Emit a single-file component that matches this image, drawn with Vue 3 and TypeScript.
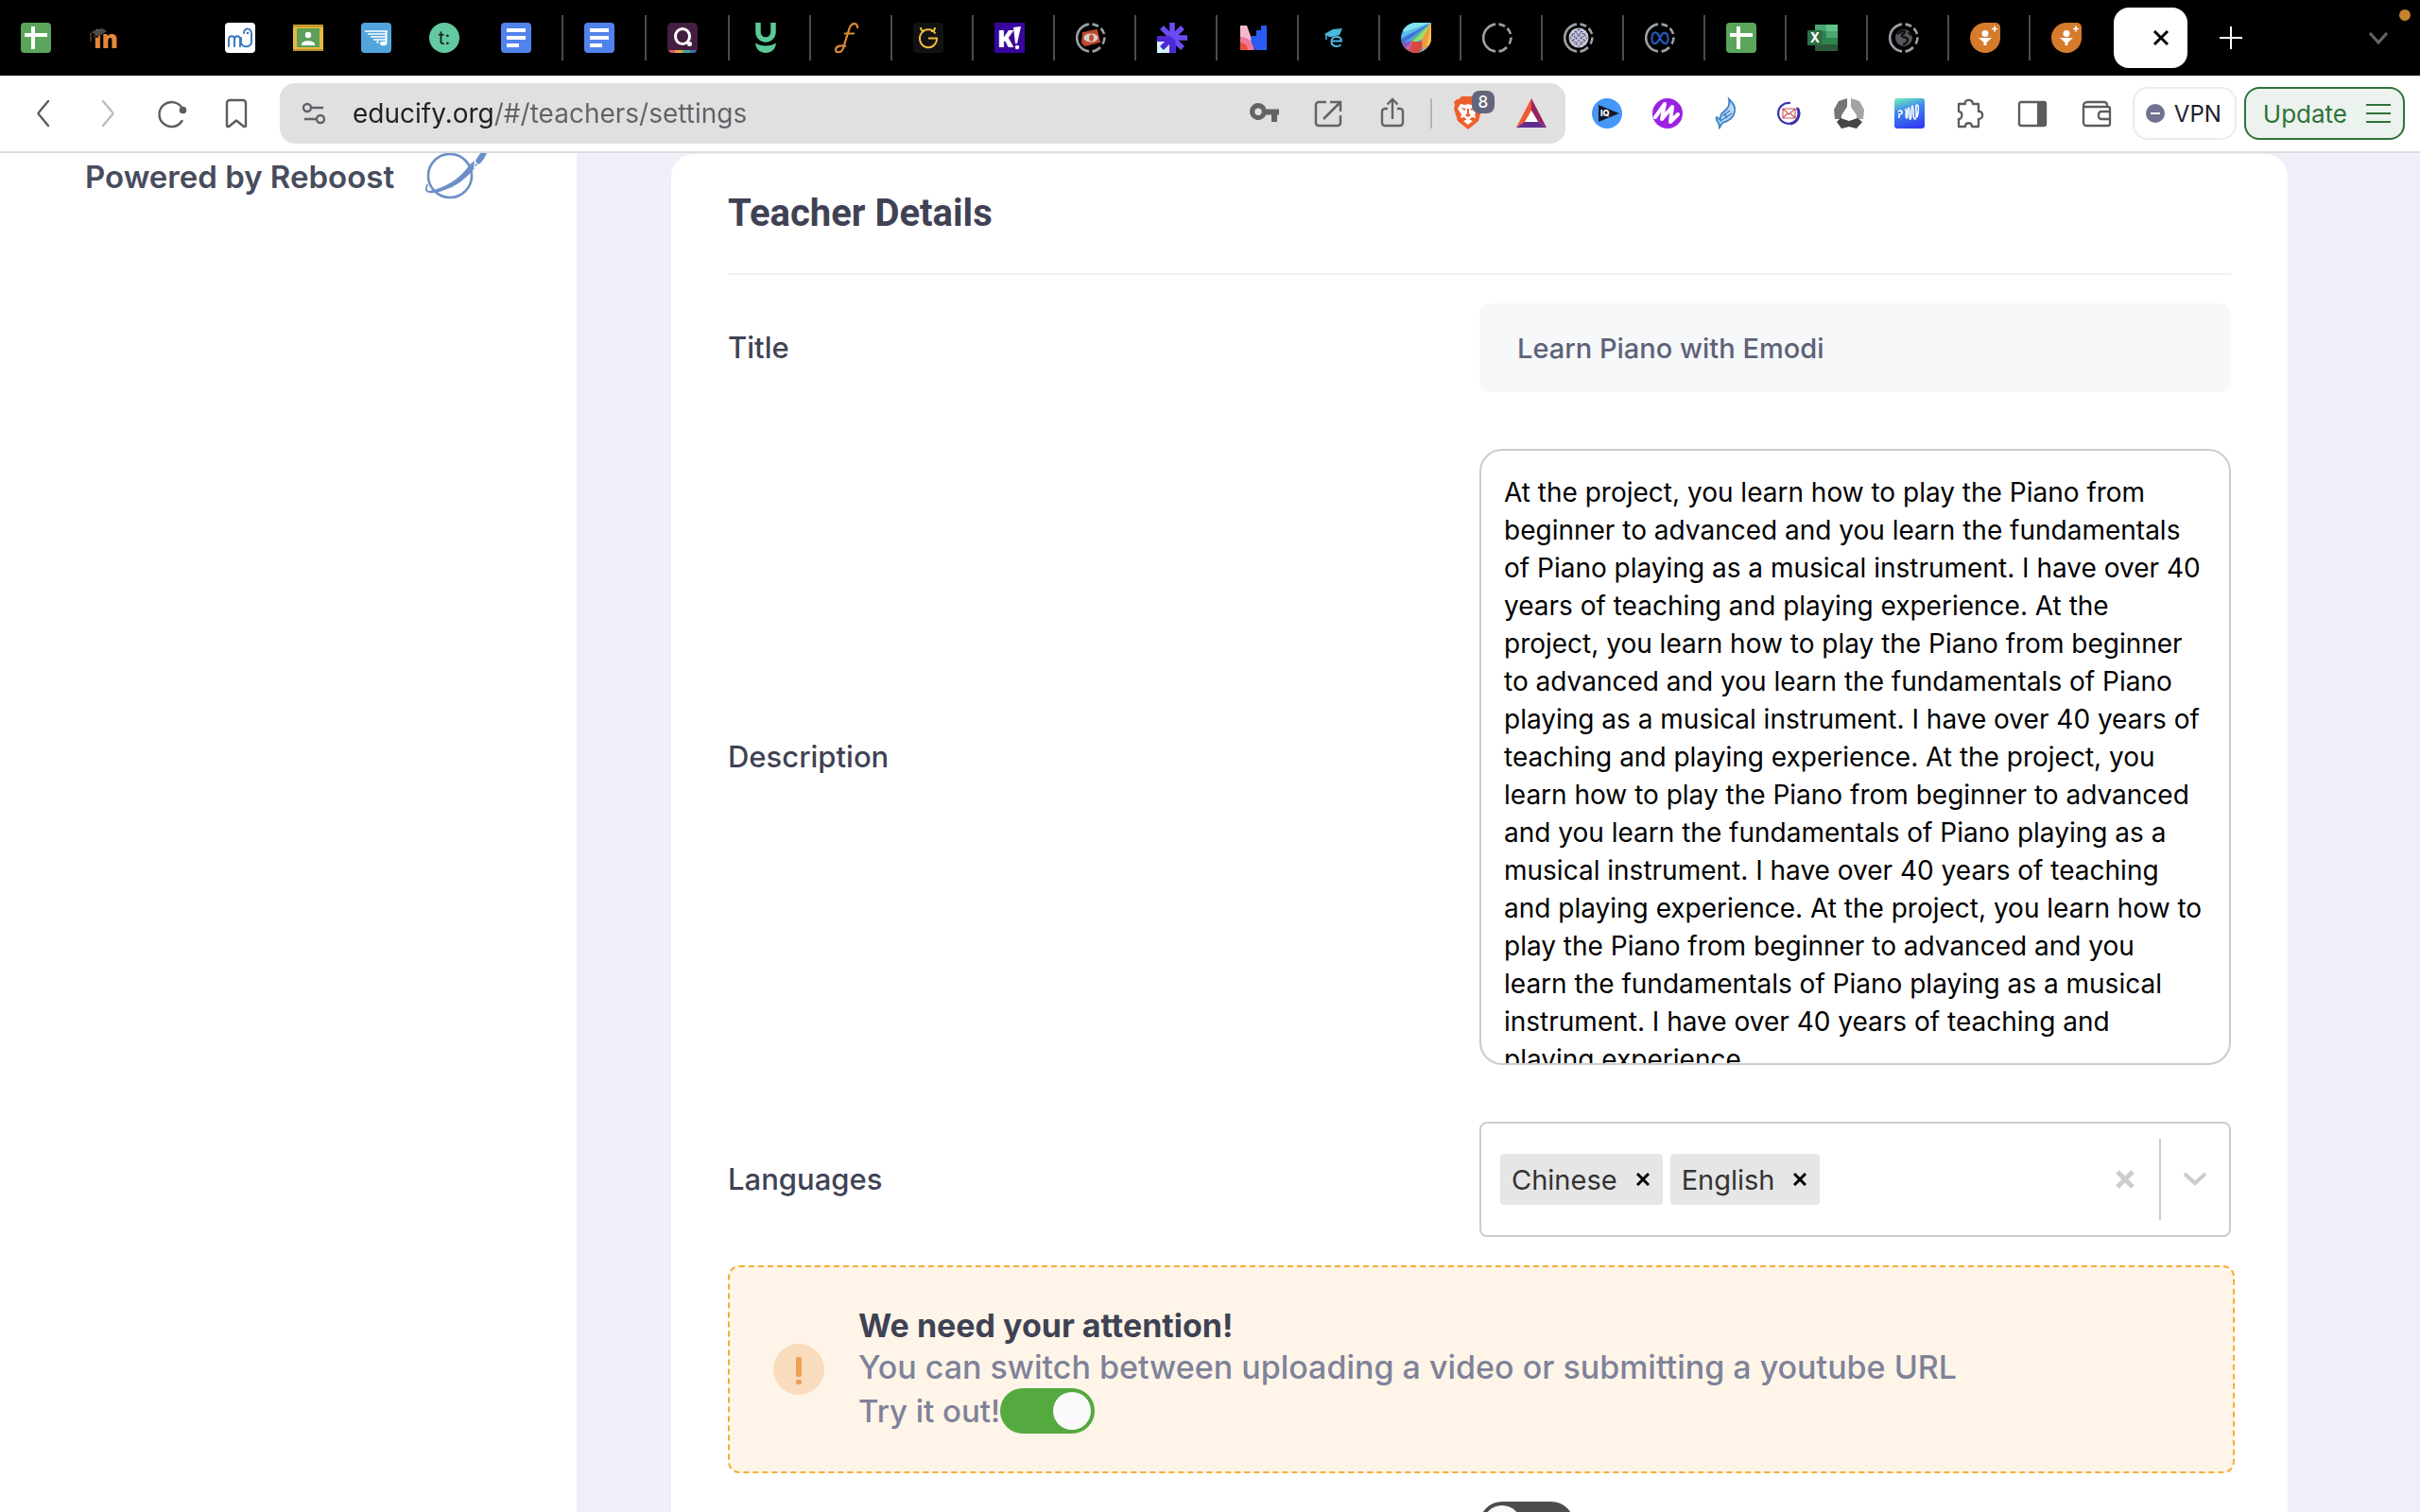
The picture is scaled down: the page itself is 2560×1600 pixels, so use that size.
<script setup lang="ts">
import { ref } from 'vue'

interface Tab {
  icon: string
  label: string
}

const ring =
  '<g fill="none" stroke="#9aa0a6" stroke-width="2.6"><path d="M14 1.6A14.5 14.5 0 0 0 14 30.4"/><path d="M17.5 1.6A14.5 14.5 0 0 1 24 3.8M26.5 6A14.5 14.5 0 0 1 30 12M30.500 15.500A14.500 14.500 0 0 1 28.500 22.500M26 26A14.500 14.500 0 0 1 17.500 30.400"/></g>'

const sheets =
  '<rect width="32" height="32" rx="4" fill="#5aa55b"/><path d="M4 13h24M13 4v24" stroke="#fff" stroke-width="4"/>'

const docs =
  '<rect width="32" height="32" rx="4" fill="#5283ec"/><path d="M6 8h20M6 16h20M6 24h13" stroke="#fff" stroke-width="4"/>'

const lead =
  '<path d="M16 0H27a5 5 0 0 1 5 5V16A16 16 0 1 1 16 0Z" fill="#d67b2c"/><circle cx="16" cy="11.500" r="3.500" fill="#fff"/><path d="M9 16h14l-5.500 5v3l-3 0v-3Z" fill="#fff"/><path d="M26 3.500v6M23 6.500h6" stroke="#fff" stroke-width="1.600"/>'

const icons: Record<string, string> = {
  sheets,
  docs,
  lead,
  blank: '',
  moodle:
    '<text x="5" y="27" font-family="Open Sans, sans-serif" font-weight="800" font-size="26" fill="#e0883c">in</text><path d="M2 10 14 6l5 3-8 5Z" fill="#4e4a48"/><path d="M2 11v9" stroke="#6b3b22" stroke-width="1.500"/><path d="M5 13h5v3H5Z" fill="#2b2624"/>',
  musescore:
    '<rect width="32" height="32" rx="4" fill="#fff"/><path d="M4 25V18c0-5 6-5 6 0v7M10 18c0-5 6-5 6 0v7M17 16v4c0 7 11 7 11 0v-8c0-7-8-7-8-1" fill="none" stroke="#3d78bd" stroke-width="2" stroke-linecap="round"/><circle cx="24" cy="11" r="1.300" fill="#3d78bd"/>',
  classroom:
    '<rect y="2" width="32" height="28" rx="1" fill="#e9b93f"/><path d="M0 3.500h32M0 29h32" stroke="#b8912c" stroke-width="2"/><rect x="4" y="6" width="24" height="20" fill="#5b9f59"/><circle cx="16" cy="13" r="3.200" fill="#fff"/><path d="M9 23c0-5 14-5 14 0v1H9Z" fill="#fff"/>',
  noteflight:
    '<rect width="32" height="32" rx="4" fill="#51a4dc"/><path d="M4 9h24M7 12h19M10 15h16M13 18h13" stroke="#fff" stroke-width="1.500"/><path d="M26.500 9v13" stroke="#fff" stroke-width="2"/><ellipse cx="23.500" cy="22" rx="3.600" ry="2.300" fill="#fff"/><circle cx="17.500" cy="20.500" r="1.200" fill="#fff"/>',
  tcircle:
    '<circle cx="16" cy="16" r="16" fill="#62c9a0"/><text x="16" y="23" text-anchor="middle" font-family="Inter, sans-serif" font-size="20" fill="#17202c">t:</text>',
  quizgame:
    '<rect width="32" height="32" rx="5" fill="#431e40"/><path d="M1 28.500Q2 32 5 32H9V29H1Z" fill="#e0506e"/><path d="M8 29h8v3H8Z" fill="#f0a63c"/><path d="M16 29h8v3h-8Z" fill="#45a59b"/><path d="M24 29h7q-1 3-4 3h-3Z" fill="#3b6fb0"/><ellipse cx="16" cy="14.500" rx="7.500" ry="8" fill="none" stroke="#fff" stroke-width="3"/><circle cx="23.500" cy="22.500" r="2.500" fill="#fff"/>',
  ugreen:
    '<path d="M8 0v10a8 8 0 0 0 16 0V0" fill="none" stroke="#5bca97" stroke-width="5.500"/><path d="M5 21.500c6 4 16 4 22 0-1 14-21 14-22 0Z" fill="#5bca97"/>',
  fscript:
    '<path d="M27 6c1-6-6-7-8.500 0L12 27c-2 6-9 5-8 1 1-4 7-4 11-3" fill="none" stroke="#df8a33" stroke-width="2.200"/><path d="M13 11.500h11" stroke="#df8a33" stroke-width="2"/>',
  ghorn:
    '<rect width="32" height="32" rx="4" fill="#121212"/><path d="M23.500 11.500A9 9.500 0 1 0 25 16.500H16M8 5q0 4 4 4M23 5q0 4-4 4" fill="none" stroke="#f0bd3a" stroke-width="2"/>',
  kahoot:
    '<rect width="32" height="32" fill="#38069c"/><text x="3" y="26" font-family="Open Sans, sans-serif" font-weight="800" font-size="25" fill="#fff">K</text><path d="m20 5 8-1-4 18h-2Z" fill="#fff"/><circle cx="24" cy="26" r="2.200" fill="#fff"/>',
  eye:
    ring +
    '<path d="m8 11 14-3 3 12-15 4-3-3Z" fill="#bf4a2c" stroke="#bf4a2c" stroke-width="2" stroke-linejoin="round"/><ellipse cx="16" cy="16" rx="7.500" ry="4.500" fill="#d4cfcb"/><ellipse cx="16.500" cy="16" rx="2.400" ry="3.600" fill="#bf4a2c"/>',
  burst:
    '<path d="M0 14h20v18H0Z" fill="#4f27d6"/><path d="M0 20h13v12H0Z" fill="#d3f3fb"/><path d="M16 0v16h16M16 16 5 5M27 5 16 16l11 11" fill="none" stroke="#6c4bf6" stroke-width="5.500"/><path d="M16 16 5 27" stroke="#4f27d6" stroke-width="5.500"/><path d="M0 14h14v5H0ZM13.500 18h6v14h-6Z" fill="#4f27d6"/>',
  nblocks:
    '<path d="M2 3h7l5 14v12H2Z" fill="#f5b9cf"/><path d="M2 15c8 0 14 6 15 14H2Z" fill="#ee7898"/><path d="M2 21c4 0 8 3 8 8H2Z" fill="#e94f3c"/><path d="M14 14h5V8h5V3h6v26H18L13 19Z" fill="#2a5cf5"/>',
  ecap:
    '<path d="m5 12 9-5 10-1-3 7-8 2-3 0Z" fill="#4cb9df"/><path d="M7 12v6" stroke="#4cb9df" stroke-width="1.500"/><path d="M13 19.500h10q0-4.500-5-4.500-5.500 0-5.500 5 0 5 6 5 2.500 0 4-2" fill="none" stroke="#4cb9df" stroke-width="2"/>',
  drop:
    '<clipPath id="drop"><path d="M16 0H32V16A16 16 0 1 1 16 0Z"/></clipPath><g clip-path="url(#drop)"><path d="M0 0h32v32H0Z" fill="#4e9de0"/><path d="M0 0h32L3 11Z" fill="#7fe6ee"/><path d="M32 0 3 10l-3 6Z" fill="#5cbcf2"/><path d="M32 0 0 18v5Z" fill="#3c6fd0"/><path d="M32 0 8 22l16-5Z" fill="#6cc85a"/><path d="M32 0 11 22l13-5Z" fill="#9be06b"/><path d="M0 22 12 19 4 30Z" fill="#8c54b5"/><path d="m12 19-9 10 9 3Z" fill="#c163a6"/><path d="m12 20 12 0-4 12H9Z" fill="#d9483f"/><path d="M32 0 22 18l1 12 9-9Z" fill="#f09b3c"/><path d="M32 0v22l-5 4Z" fill="#f4c44b"/></g>',
  circle: ring,
  waffle:
    ring +
    '<circle cx="16" cy="16" r="10.500" fill="#c9c9cf"/><path d="m9 12 11 11M12 9l11 11M16 7l9 9M7 16l9 9M23 12 12 23M20 9 9 20M16 7l-9 9M25 16l-9 9" stroke="#4b479b" stroke-width="1.300" stroke-dasharray="1.500 1.500"/>',
  meta:
    ring +
    '<path d="M16 16c-4-9-8.500-6-8.500 1 0 7 5 7 8.500-1s8.500-6 8.500 1c0 7-5 7-8.500-1Z" fill="none" stroke="#2458b8" stroke-width="2.200"/>',
  excel:
    '<path d="M8 2h24v28H8Z" fill="#2f8550"/><path d="M20 2h12v7H20Z" fill="#62c38a"/><path d="M8 2h12v7H8Z" fill="#4aa772"/><path d="M20 9h12v7H20Z" fill="#4aa772"/><path d="M8 23h24v7H8Z" fill="#2b5b3b"/><rect y="8" width="16" height="16" rx="1" fill="#2c6e42"/><text x="8" y="21" text-anchor="middle" font-family="Inter, sans-serif" font-weight="700" font-size="14" fill="#fff">X</text>',
  globe:
    ring +
    '<circle cx="16" cy="16" r="9" fill="#55575a"/><path d="M9 12c4-4 8-4 8-2s-4 2-3 4 6 1 6 4-3 5-5 5M21 10c1 2 3 2 3 4" fill="none" stroke="#141414" stroke-width="2.600"/>',
  back: '<path d="M21 3 11 15q-1 1 0 2l10 12" fill="none" stroke="#5c5c5c" stroke-width="2.400" stroke-linecap="round"/>',
  forward:
    '<path d="m11 3 10 12q1 1 0 2L11 29" fill="none" stroke="#bcbcbc" stroke-width="2.400" stroke-linecap="round"/>',
  reload:
    '<path d="M27 11A13 13 0 1 0 26.500 24" fill="none" stroke="#5c5c5c" stroke-width="2.400" stroke-linecap="round"/><circle cx="27.500" cy="12.500" r="3.800" fill="#5c5c5c"/>',
  bookmark:
    '<path d="M6 5a3 3 0 0 1 3-3h14a3 3 0 0 1 3 3v24.500l-2 .5-8-6.500L8 30l-2-.5Z" fill="none" stroke="#5c5c5c" stroke-width="2.400" stroke-linejoin="round"/>',
  tune: '<g fill="none" stroke="#5f6368" stroke-width="2.400"><circle cx="9" cy="10" r="4"/><path d="M14 10h12M6 22h12"/><circle cx="23" cy="22" r="4"/></g>',
  key: '<path d="M10 5a9 9 0 1 0 8.300 12.500H24V25h6v-7.500h2v-6H18.300A9 9 0 0 0 10 5Zm0 5.500a3.700 3.700 0 1 1 0 7.400 3.700 3.700 0 0 1 0-7.400Z" fill="#636363"/>',
  open: '<path d="M14 4H6a3 3 0 0 0-3 3v19a3 3 0 0 0 3 3h20a3 3 0 0 0 3-3v-8M18 4h11v10M28 5 11 22" fill="none" stroke="#636363" stroke-width="2.500"/>',
  share:
    '<path d="M11 11H8a3 3 0 0 0-3 3v12a3 3 0 0 0 3 3h16a3 3 0 0 0 3-3V14a3 3 0 0 0-3-3h-3M16 22V1M10.500 6.500 16 1l5.500 5.500" fill="none" stroke="#636363" stroke-width="2.400"/>',
  brave:
    '<path d="M9 0h13l3 3 4-1 1 5-1 4 1 4-3 11-11 9L5 26 1 13l1-4-1-3 3-3 2 0Z" fill="#ee5f2c"/><path d="m8 8 5 1 3-1 3 1 5-1 3 5-4 6 1 4-4-1-4 4-4-4-4 1 1-4-4-6Z" fill="#fff"/><path d="m8 12 6 1-2 2ZM24 12l-6 1 2 2ZM15 13h2l0 5 2 2-3 2-3-2 2-2Z" fill="#ee5f2c"/><path d="m11 26 5-2 5 2-5 4Z" fill="#fff"/>',
  bat: '<path d="M16 0 0 31l10-6 6-12Z" fill="#f05a35"/><path d="m16 0 16 31-9-6-7-12Z" fill="#952460"/><path d="M0 31h32l-9-6H9Z" fill="#5f2d8e"/><path d="m16 13 7 12H9Z" fill="#fff"/>',
  iq: '<circle cx="16" cy="16" r="16" fill="#4698f8"/><path d="m7 7 22 9L7 25Z" fill="#141a28"/><text x="9" y="19" font-family="Inter, sans-serif" font-weight="800" font-size="9" fill="#fff">IQ</text>',
  mpurple:
    '<circle cx="16" cy="16" r="16" fill="#9c22e2"/><path d="M3 20 13 6l-3 16L21 9l-2 16 8-8" fill="none" stroke="#fff" stroke-width="4" stroke-linejoin="round" stroke-linecap="round"/>',
  feather:
    '<path d="M17 1c5 5 7 8 6 13s-5 10-13 12l-3 5-1-5c-2-2-3-4-2-6l4 3c-1-7 3-8 6-11 3-3 4-6 3-11Z" fill="#b9daf2" stroke="#3e82c4" stroke-width="1.800"/><path d="m10 19 8-6M11 22l9-6M12 16l3 5M8 24l9-6" stroke="#3e82c4" stroke-width="1.500"/>',
  mail: '<path d="M26 11A11 11 0 1 1 18 5" fill="none" stroke="#3a33b0" stroke-width="2.200"/><path d="M25 10A11 11 0 0 1 18 27" fill="none" stroke="#3a33b0" stroke-width="3"/><path d="M10 11h13v10H10Zm0 0 6.500 6L23 11M10 21l5-5M23 21l-5-5" fill="none" stroke="#d05a5f" stroke-width="1.200"/>',
  tri: '<path d="M14 0v9L8 18v4H1L0 12 5 3Z" fill="#767676"/><path d="M18 0v9l6 9v4h7l1-10-5-9Z" fill="#a3a3a3"/><path d="m7 21 9 3 9-3 5 4-6 7-8-2-8 2-5-7Z" fill="#454545"/>',
  wave: '<linearGradient id="wave" x1="0.200" y1="0" x2="0.500" y2="1"><stop stop-color="#6ee6c0"/><stop offset="0.400" stop-color="#3f88ee"/><stop offset="1" stop-color="#3140f0"/></linearGradient><rect width="32" height="32" rx="3" fill="url(#wave)"/><path d="M4 14c5-3 6 3 1 3v4M11 12c3-2 0 9 2 9s0-11 2-11 0 13 2 12 0-14 2-14 0 15 3 14-1-16 2-15 1 9 0 13" fill="none" stroke="#fff" stroke-width="1.600"/>',
  puzzle:
    '<path d="M4 6h7c-2-5 8-6 8 0h6v8c5-1 6 8 0 8v8h-7c0-5-7-5-7 0H4v-8c4 0 5-8 0-8Z" fill="none" stroke="#5c5c5c" stroke-width="2.300" stroke-linejoin="round"/>',
  panel:
    '<rect x="2" y="4" width="28" height="25" rx="2" fill="none" stroke="#5c5c5c" stroke-width="2.400"/><path d="M21 4h9v25h-9Z" fill="#5c5c5c"/>',
  wallet:
    '<path d="M2 8a4 4 0 0 1 4-4h18a3 3 0 0 1 3 3v2h1a2 2 0 0 1 2 2v16a2 2 0 0 1-2 2H5a3 3 0 0 1-3-3ZM3 9h24M30 14H21a3 3 0 0 0-3 3v2a3 3 0 0 0 3 3h9" fill="none" stroke="#5c5c5c" stroke-width="2.300"/>',
}

const pinned: Tab[] = [
  { icon: 'sheets', label: 'Spreadsheet' },
  { icon: 'moodle', label: 'Moodle' },
  { icon: 'blank', label: 'Pinned tab' },
  { icon: 'musescore', label: 'Scores' },
  { icon: 'classroom', label: 'Classroom' },
  { icon: 'noteflight', label: 'Notation' },
  { icon: 'tcircle', label: 'Teaching' },
]

const tabs: Tab[] = [
  { icon: 'docs', label: 'Document' },
  { icon: 'docs', label: 'Document' },
  { icon: 'quizgame', label: 'Quiz' },
  { icon: 'ugreen', label: 'Udemy' },
  { icon: 'fscript', label: 'Flat' },
  { icon: 'ghorn', label: 'Genially' },
  { icon: 'kahoot', label: 'Kahoot' },
  { icon: 'eye', label: 'Viewer' },
  { icon: 'burst', label: 'Burst' },
  { icon: 'nblocks', label: 'Blocks' },
  { icon: 'ecap', label: 'Education' },
  { icon: 'drop', label: 'Colours' },
  { icon: 'circle', label: 'Loading' },
  { icon: 'waffle', label: 'Loading' },
  { icon: 'meta', label: 'Meta' },
  { icon: 'sheets', label: 'Spreadsheet' },
  { icon: 'excel', label: 'Excel' },
  { icon: 'globe', label: 'Page' },
  { icon: 'lead', label: 'Leads' },
  { icon: 'lead', label: 'Leads' },
]

const navButtons: Tab[] = [
  { icon: 'back', label: 'Back' },
  { icon: 'forward', label: 'Forward' },
  { icon: 'reload', label: 'Reload' },
  { icon: 'bookmark', label: 'Bookmark' },
]

const extensions: Tab[] = [
  { icon: 'iq', label: 'IQ' },
  { icon: 'mpurple', label: 'Mote' },
  { icon: 'feather', label: 'Feather' },
  { icon: 'mail', label: 'Mail' },
  { icon: 'tri', label: 'Tracker' },
  { icon: 'wave', label: 'Read aloud' },
  { icon: 'puzzle', label: 'Extensions' },
]

const url = ref('educify.org/#/teachers/settings')
const title = ref('Learn Piano with Emodi')
const sentence =
  'At the project, you learn how to play the Piano from beginner to advanced and you learn the fundamentals of Piano playing as a musical instrument. I have over 40 years of teaching and playing experience.'
const description = ref(Array(4).fill(sentence).join(' '))
const languages = ref<string[]>(['Chinese', 'English'])
const useYoutube = ref(true)
const video = ref(false)

function removeLanguage(name: string) {
  languages.value = languages.value.filter((l) => l !== name)
}
</script>

<template>
  <div class="window">
    <header class="chrome">
      <nav class="tab-strip" aria-label="Tabs">
        <button v-for="(t, i) in pinned" :key="'p' + i" class="tab pinned" :aria-label="t.label">
          <svg class="icon" viewBox="0 0 32 32" v-html="icons[t.icon]" />
        </button>
        <button v-for="(t, i) in tabs" :key="i" class="tab" :class="{ wide: i < 3 }" :aria-label="t.label">
          <svg class="icon" viewBox="0 0 32 32" v-html="icons[t.icon]" />
        </button>
        <div class="tab-active">
          <button class="plain" aria-label="Close tab">
            <svg width="18" height="18" viewBox="0 0 18 18"><path d="m2 2 14 14M16 2 2 16" stroke="#000" stroke-width="3" /></svg>
          </button>
        </div>
        <button class="plain new-tab" aria-label="New tab">
          <svg width="24" height="24" viewBox="0 0 24 24"><path d="M12 0v24M0 12h24" stroke="#fff" stroke-width="2" /></svg>
        </button>
        <button class="plain tab-menu" aria-label="Search tabs">
          <svg width="22" height="16" viewBox="0 0 22 16"><path d="m2 3 9 10 9-10" fill="none" stroke="#666" stroke-width="3" /></svg>
        </button>
        <span class="notice-dot"></span>
      </nav>

      <div class="toolbar">
        <div class="nav-buttons">
          <button v-for="b in navButtons" :key="b.icon" class="plain" :aria-label="b.label">
            <svg class="icon" viewBox="0 0 32 32" v-html="icons[b.icon]" />
          </button>
        </div>
        <div class="address">
          <button class="plain" aria-label="Site settings">
            <svg class="icon" viewBox="0 0 32 32" v-html="icons.tune" />
          </button>
          <input v-model="url" class="url" type="text" aria-label="Address" spellcheck="false" />
          <div class="address-actions">
            <button v-for="k in ['key', 'open', 'share']" :key="k" class="plain" :aria-label="k">
              <svg class="icon" viewBox="0 0 32 32" v-html="icons[k]" />
            </button>
          </div>
          <span class="address-rule"></span>
          <button class="plain shield" aria-label="Brave Shields">
            <svg class="shield-icon" viewBox="0 0 31 36" v-html="icons.brave" />
            <span class="badge">8</span>
          </button>
          <button class="plain" aria-label="Rewards">
            <svg class="bat-icon" viewBox="0 0 32 32" v-html="icons.bat" />
          </button>
        </div>
        <div class="extensions">
          <button v-for="e in extensions" :key="e.icon" class="plain" :aria-label="e.label">
            <svg class="icon" viewBox="0 0 32 32" v-html="icons[e.icon]" />
          </button>
        </div>
        <div class="panels">
          <button class="plain" aria-label="Sidebar"><svg class="icon" viewBox="0 0 32 32" v-html="icons.panel" /></button>
          <button class="plain" aria-label="Wallet"><svg class="icon" viewBox="0 0 32 32" v-html="icons.wallet" /></button>
        </div>
        <button class="pill vpn">
          <svg width="20" height="20" viewBox="0 0 20 20"><circle cx="10" cy="10" r="10" fill="#6f7390" /><path d="M5 10h10" stroke="#fff" stroke-width="2" /></svg>
          <span>VPN</span>
        </button>
        <button class="pill update">
          <span>Update</span>
          <svg width="26" height="22" viewBox="0 0 26 22"><path d="M0 2h26M0 11h26M0 20h26" stroke="#2f7339" stroke-width="2" /></svg>
        </button>
      </div>
    </header>

    <div class="page">
      <aside class="sidebar">
        <span>Powered by Reboost</span>
        <svg class="planet" viewBox="0 0 70 50">
          <circle cx="28" cy="24" r="23" fill="none" stroke="#6d8fc7" stroke-width="2.600" />
          <path d="M4 32Q-1 41 6 42 12 43 20 40 40 34 54 16L49 12Q36 31 14 38L10 39 6 40Q2 40 5 34Z" fill="#6d8fc7" />
          <path d="M49 12 54 8 53 16ZM55 8 60 0H67L64 6 60 11 57 12ZM55 11 54 14 57 13Z" fill="#6d8fc7" />
        </svg>
      </aside>

      <main class="content">
        <section class="card">
          <h2 class="card-title">Teacher Details</h2>
          <form class="form" @submit.prevent>
            <div class="row">
              <label class="label" for="title">Title</label>
              <input id="title" v-model="title" class="text-input" type="text" />
            </div>
            <div class="row spaced">
              <label class="label" for="description">Description</label>
              <textarea id="description" v-model="description" class="text-area" spellcheck="false"></textarea>
            </div>
            <div class="row spaced">
              <label class="label" for="languages">Languages</label>
              <div class="multi-select">
                <span v-for="l in languages" :key="l" class="chip">
                  {{ l }}
                  <button type="button" class="plain" :aria-label="'Remove ' + l" @click="removeLanguage(l)">
                    <svg width="14" height="14" viewBox="0 0 14 14"><path d="m1 1 12 12M13 1 1 13" stroke="#000" stroke-width="3" /></svg>
                  </button>
                </span>
                <input id="languages" class="search" type="text" role="combobox" aria-expanded="false" />
                <button type="button" class="plain" aria-label="Clear" @click="languages = []">
                  <svg width="20" height="20" viewBox="0 0 20 20"><path d="m2 2 16 16M18 2 2 18" stroke="#ccc" stroke-width="5" /></svg>
                </button>
                <span class="separator"></span>
                <button type="button" class="plain" aria-label="Open list">
                  <svg width="26" height="16" viewBox="0 0 26 16"><path d="m3 3 10 9 10-9" fill="none" stroke="#ccc" stroke-width="4" stroke-linecap="round" /></svg>
                </button>
              </div>
            </div>

            <div class="alert">
              <svg class="alert-icon" viewBox="0 0 54 54">
                <circle cx="27" cy="27" r="27" fill="#f9dbbe" />
                <rect x="24" y="14" width="6" height="21" rx="2" fill="#ee9f55" />
                <rect x="24" y="38" width="6" height="5" rx="2" fill="#ee9f55" />
              </svg>
              <div class="alert-body">
                <h4 class="alert-title">We need your attention!</h4>
                <p class="alert-text">You can switch between uploading a video or submitting a youtube URL</p>
                <label class="alert-try">Try it out!<input v-model="useYoutube" class="switch" type="checkbox" role="switch" /></label>
              </div>
            </div>

            <div class="row">
              <label class="label" for="video">Video</label>
              <input id="video" v-model="video" class="switch" type="checkbox" role="switch" />
            </div>
          </form>
        </section>
      </main>
    </div>
  </div>
</template>

<style>
html,
body {
  margin: 0;
  background: #fff;
}
</style>

<style scoped>
* {
  box-sizing: border-box;
}
.window {
  height: 100vh;
  display: flex;
  flex-direction: column;
  overflow: hidden;
  font-family: Inter, 'Liberation Sans', sans-serif;
}
button,
input,
textarea {
  font-family: inherit;
}
.plain {
  display: flex;
  padding: 0;
  border: 0;
  background: none;
}
.icon {
  display: block;
  width: 32px;
  height: 32px;
  overflow: visible;
}
.chrome {
  flex: none;
}

/* Tab strip */
.tab-strip {
  position: relative;
  display: flex;
  align-items: center;
  height: 80px;
  background: #000;
}
.tab {
  flex: none;
  display: flex;
  align-items: center;
  width: 86px;
  height: 48px;
  padding: 0 0 0 22px;
  border: 0;
  border-right: 2px solid #4c4c4c;
  background: none;
}
.tab.wide {
  width: 88px;
}
.tab.pinned {
  width: 72px;
  border-right: 0;
}
.tab.pinned + .tab.wide {
  margin-left: 4px;
}
.tab:has(+ .tab-active) {
  border-right-color: #000;
}
.tab-active {
  flex: none;
  display: flex;
  align-items: center;
  justify-content: flex-end;
  width: 78px;
  height: 64px;
  margin-left: 2px;
  padding-right: 19px;
  border-radius: 16px;
  background: #fff;
}
.new-tab {
  margin-left: 34px;
}
.tab-menu {
  margin-left: auto;
  margin-right: 33px;
}
.notice-dot {
  position: absolute;
  top: 10px;
  right: 10px;
  width: 12px;
  height: 12px;
  border-radius: 50%;
  background: #c5832f;
}

/* Toolbar */
.toolbar {
  display: flex;
  align-items: center;
  height: 82px;
  padding: 0 16px 0 30px;
  border-bottom: 2px solid #dcdcdc;
}
.nav-buttons {
  display: flex;
  gap: 36px;
}
.address {
  flex: 1;
  display: flex;
  align-items: center;
  height: 64px;
  margin-left: 30px;
  padding: 0 18px 0 20px;
  border-radius: 16px;
  background: #e0e0e0;
}
.url {
  flex: 1;
  min-width: 0;
  height: 48px;
  margin-left: 25px;
  padding: 0;
  border: 0;
  outline: 0;
  font-size: 28px;
  color: #5f6368;
  background: linear-gradient(90deg, #1f2124 150px, #5f6368 150px);
  background-clip: text;
  -webkit-text-fill-color: transparent;
}
.address-actions {
  display: flex;
  gap: 36px;
}
.address-rule {
  width: 2px;
  height: 32px;
  margin: 0 22px 0 24px;
  background: #b4b4b4;
}
.shield {
  position: relative;
  margin-right: 34px;
}
.shield-icon {
  width: 31px;
  height: 36px;
}
.badge {
  position: absolute;
  left: 20px;
  top: -6px;
  width: 24px;
  height: 24px;
  border-radius: 8px;
  background: #63657a;
  color: #fff;
  font-size: 17px;
  font-weight: 500;
  line-height: 24px;
  text-align: center;
}
.bat-icon {
  width: 36px;
  height: 32px;
}
.extensions {
  display: flex;
  gap: 32px;
  margin-left: 28px;
}
.panels {
  display: flex;
  gap: 36px;
  margin-left: 34px;
}
.pill {
  display: flex;
  align-items: center;
  height: 56px;
  border-radius: 16px;
  font-size: 24px;
}
.vpn {
  gap: 10px;
  margin-left: 22px;
  padding: 0 14px 0 12px;
  border: 2px solid #ececec;
  background: #fff;
  color: #1b1d2b;
}
.update {
  gap: 20px;
  margin-left: 8px;
  padding: 0 13px 0 18px;
  border: 2px solid #2f7339;
  background: #ecf2ee;
  color: #2f7339;
  font-size: 26px;
}

/* Page */
.page {
  flex: 1;
  min-height: 0;
  display: flex;
  overflow: hidden;
}
.sidebar {
  flex: none;
  display: flex;
  align-items: center;
  justify-content: space-between;
  width: 610px;
  height: 50px;
  padding: 0 92px 0 90px;
  color: #474c5d;
  font-size: 33px;
  font-weight: 600;
}
.planet {
  width: 70px;
  height: 50px;
}
.content {
  flex: 1;
  min-width: 0;
  height: max-content;
  padding: 1px 140px 60px 100px;
  background: #efeff9;
}
.card {
  padding: 0 60px 60px;
  border-radius: 24px;
  background: #fff;
}
.card-title {
  margin: 0;
  border-bottom: 2px solid #eff0f6;
  font-family: Roboto, sans-serif;
  font-size: 40px;
  font-weight: 700;
  line-height: 126px;
  color: #3f4254;
}
.form {
  padding-top: 30px;
}
.row {
  display: grid;
  grid-template-columns: minmax(0, 1fr) minmax(0, 1fr);
  align-items: center;
}
.spaced {
  margin-top: 60px;
}
.label {
  font-size: 31px;
  font-weight: 500;
  line-height: 40px;
  color: #3f4254;
}
.text-input {
  height: 94px;
  padding: 0 40px;
  border: 0;
  border-radius: 12px;
  outline: 0;
  background: #f6f8fa;
  color: #5e6278;
  font-size: 29px;
  font-weight: 500;
}
.text-area {
  height: 652px;
  padding: 24px 27px 24px 24px;
  border: 2px solid #ccc;
  border-radius: 24px;
  outline: 0;
  resize: none;
  overflow: hidden;
  color: #000;
  font-size: 28px;
  line-height: 40px;
}
.multi-select {
  display: flex;
  align-items: center;
  height: 122px;
  padding: 0 23px 0 20px;
  border: 2px solid #ccc;
  border-radius: 8px;
}
.chip {
  display: flex;
  align-items: center;
  gap: 20px;
  height: 54px;
  margin-right: 8px;
  padding: 0 14px 0 12px;
  border-radius: 4px;
  background: #e6e6e6;
  color: #333;
  font-size: 29px;
}
.search {
  flex: 1;
  min-width: 0;
  height: 54px;
  padding: 0;
  border: 0;
  outline: 0;
  background: none;
  font-size: 29px;
}
.separator {
  width: 2px;
  height: 86px;
  margin: 0 23px 0 26px;
  background: #ccc;
}
.alert {
  display: flex;
  align-items: center;
  gap: 36px;
  height: 220px;
  margin: 30px -4px 30px 0;
  padding: 0 46px;
  border: 2px dashed #f4ad38;
  border-radius: 12px;
  background: #fef5e8;
}
.alert-icon {
  flex: none;
  width: 54px;
  height: 54px;
}
.alert-title {
  margin: 0;
  font-size: 34px;
  font-weight: 700;
  line-height: 44px;
  color: #3f4254;
}
.alert-text {
  margin: 0;
  font-size: 34px;
  font-weight: 500;
  line-height: 44px;
  color: #7e8299;
}
.alert-try {
  display: flex;
  align-items: center;
  font-size: 33px;
  font-weight: 500;
  line-height: 48px;
  color: #7e8299;
}
.switch {
  appearance: none;
  position: relative;
  width: 100px;
  height: 48px;
  margin: 0;
  border-radius: 24px;
  background: #4d4d4d;
}
.switch::before {
  content: '';
  position: absolute;
  top: 4px;
  left: 4px;
  width: 40px;
  height: 40px;
  border-radius: 50%;
  background: #fafafa;
}
.switch:checked {
  background: #54a93f;
}
.switch:checked::before {
  left: 56px;
}
</style>
